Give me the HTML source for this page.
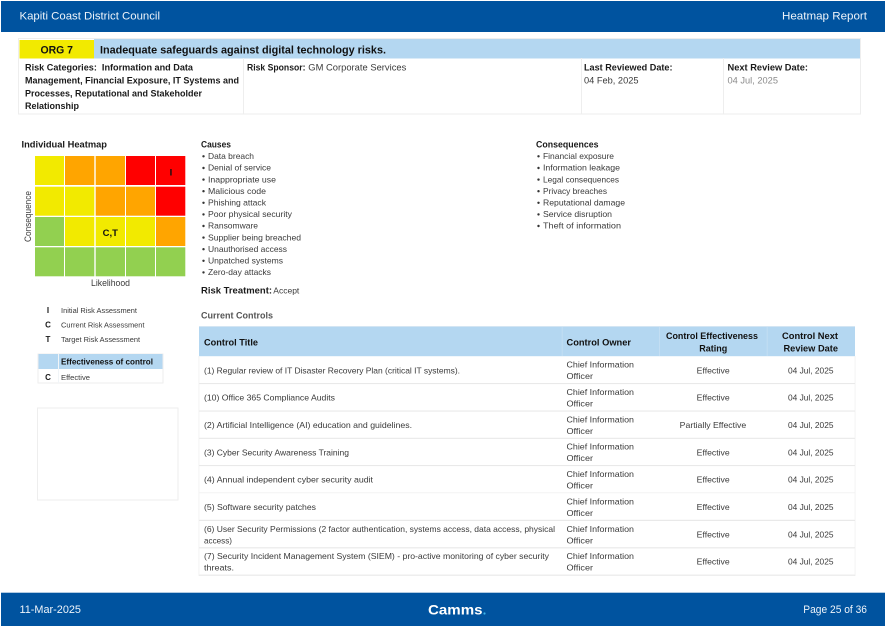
<!DOCTYPE html>
<html lang="en">
<head>
<meta charset="utf-8">
<title>Heatmap Report</title>
<style>
html,body{margin:0;padding:0;background:#fff;width:885px;height:626px;overflow:hidden}
svg{display:block;filter:blur(.35px)}
text{font-family:"Liberation Sans",sans-serif;font-size:8.4px;fill:#3a3a3a}
.b{font-weight:bold;fill:#1a1a1a}
.w{fill:#eef4fa;font-size:11px}
.h{font-size:9px}
.m{text-anchor:middle}
</style>
</head>
<body>
<svg width="885" height="626" viewBox="0 0 885 626" xmlns="http://www.w3.org/2000/svg">
<rect width="885" height="626" fill="#fff"/>

<!-- Header -->
<rect x="1" y="1" width="884" height="31" fill="#00539f"/>
<text class="w" x="19.5" y="19.5" textLength="140.5" lengthAdjust="spacingAndGlyphs">Kapiti Coast District Council</text>
<text class="w" x="782" y="19.5" textLength="85" lengthAdjust="spacingAndGlyphs">Heatmap Report</text>

<!-- Risk header -->
<rect x="18.5" y="38.5" width="842" height="75.5" fill="#fff" stroke="#eeeeee" stroke-width="1"/>
<rect x="94" y="39" width="766" height="19.5" fill="#b4d7f1"/>
<rect x="19.5" y="40" width="74.5" height="18.5" fill="#f2ea00"/>
<text class="b" x="40.5" y="53.5" style="font-size:11.4px;fill:#111" textLength="32.5" lengthAdjust="spacingAndGlyphs">ORG 7</text>
<text class="b" x="100" y="53.5" style="font-size:11.2px;fill:#111" textLength="286" lengthAdjust="spacingAndGlyphs">Inadequate safeguards against digital technology risks.</text>
<rect x="243" y="58" width="1" height="56" fill="#eeeeee"/>
<rect x="581" y="58" width="1" height="56" fill="#eeeeee"/>
<rect x="723" y="58" width="1" height="56" fill="#eeeeee"/>
<text class="b h" x="25" y="70.7" textLength="168" lengthAdjust="spacingAndGlyphs" xml:space="preserve">Risk Categories:  Information and Data</text>
<text class="b h" x="25" y="83.5" textLength="214" lengthAdjust="spacingAndGlyphs">Management, Financial Exposure, IT Systems and</text>
<text class="b h" x="25" y="96.3" textLength="177" lengthAdjust="spacingAndGlyphs">Processes, Reputational and Stakeholder</text>
<text class="b h" x="25" y="109" textLength="54" lengthAdjust="spacingAndGlyphs">Relationship</text>
<text class="b h" x="247" y="70.7" textLength="58.5" lengthAdjust="spacingAndGlyphs">Risk Sponsor:</text>
<text class="h" x="308.3" y="70.7" textLength="98" lengthAdjust="spacingAndGlyphs">GM Corporate Services</text>
<text class="b h" x="584" y="70.7" textLength="88.5" lengthAdjust="spacingAndGlyphs">Last Reviewed Date:</text>
<text class="h" x="584" y="83.5" textLength="54.5" lengthAdjust="spacingAndGlyphs">04 Feb, 2025</text>
<text class="b h" x="727.5" y="70.7" textLength="80.5" lengthAdjust="spacingAndGlyphs">Next Review Date:</text>
<text class="h" x="727.5" y="83.5" textLength="50.5" lengthAdjust="spacingAndGlyphs" style="fill:#8a8a8a">04 Jul, 2025</text>

<!-- Heatmap -->
<text class="b h" x="21.5" y="147.5" textLength="85.5" lengthAdjust="spacingAndGlyphs">Individual Heatmap</text>
<g>
<rect x="35" y="156" width="29" height="29" fill="#f2ea00"/>
<rect x="65" y="156" width="29.3" height="29" fill="#ffa500"/>
<rect x="95.7" y="156" width="29.3" height="29" fill="#ffa500"/>
<rect x="126" y="156" width="29" height="29" fill="#ff0000"/>
<rect x="156" y="156" width="29.3" height="29" fill="#ff0000"/>
<rect x="35" y="186.7" width="29" height="29" fill="#f2ea00"/>
<rect x="65" y="186.7" width="29.3" height="29" fill="#f2ea00"/>
<rect x="95.7" y="186.7" width="29.3" height="29" fill="#ffa500"/>
<rect x="126" y="186.7" width="29" height="29" fill="#ffa500"/>
<rect x="156" y="186.7" width="29.3" height="29" fill="#ff0000"/>
<rect x="35" y="217" width="29" height="29" fill="#92d050"/>
<rect x="65" y="217" width="29.3" height="29" fill="#f2ea00"/>
<rect x="95.7" y="217" width="29.3" height="29" fill="#f2ea00"/>
<rect x="126" y="217" width="29" height="29" fill="#f2ea00"/>
<rect x="156" y="217" width="29.3" height="29" fill="#ffa500"/>
<rect x="35" y="247.3" width="29" height="29" fill="#92d050"/>
<rect x="65" y="247.3" width="29.3" height="29" fill="#92d050"/>
<rect x="95.7" y="247.3" width="29.3" height="29" fill="#92d050"/>
<rect x="126" y="247.3" width="29" height="29" fill="#92d050"/>
<rect x="156" y="247.3" width="29.3" height="29" fill="#92d050"/>
</g>
<text class="b m" x="171" y="175.3" style="font-size:9.5px;fill:#111">I</text>
<text class="b m" x="110.3" y="236" style="font-size:9.5px;fill:#111">C,T</text>
<text class="h m" transform="translate(30.8,216.5) rotate(-90)" x="0" y="0" textLength="51" lengthAdjust="spacingAndGlyphs">Consequence</text>
<text class="h" x="91" y="286" textLength="39" lengthAdjust="spacingAndGlyphs">Likelihood</text>

<!-- Legend -->
<text class="b m" x="48" y="313" style="font-size:8px">I</text>
<text x="61" y="313" style="font-size:7.7px" textLength="76" lengthAdjust="spacingAndGlyphs">Initial Risk Assessment</text>
<text class="b m" x="48" y="327.5" style="font-size:8px">C</text>
<text x="61" y="327.5" style="font-size:7.7px" textLength="83.5" lengthAdjust="spacingAndGlyphs">Current Risk Assessment</text>
<text class="b m" x="48" y="342" style="font-size:8px">T</text>
<text x="61" y="342" style="font-size:7.7px" textLength="79" lengthAdjust="spacingAndGlyphs">Target Risk Assessment</text>

<rect x="38" y="354" width="125" height="29" fill="#fff" stroke="#eeeeee" stroke-width="1"/>
<rect x="38.5" y="354" width="124" height="15" fill="#b4d7f1"/>
<rect x="58" y="354" width="1" height="29" fill="#f1f5f8"/>
<text class="b" x="61" y="364.5" style="font-size:8.3px;fill:#111" textLength="92" lengthAdjust="spacingAndGlyphs">Effectiveness of control</text>
<text class="b m" x="48" y="380" style="font-size:8px">C</text>
<text x="61" y="380" style="font-size:7.7px" textLength="29" lengthAdjust="spacingAndGlyphs">Effective</text>

<rect x="37.5" y="408" width="140.5" height="92" fill="#fff" stroke="#eeeeee" stroke-width="1"/>

<!-- Causes -->
<text class="b h" x="201" y="147.5" textLength="30" lengthAdjust="spacingAndGlyphs">Causes</text>
<g fill="#333">
<circle cx="203.5" cy="156.3" r="1.2"/><circle cx="203.5" cy="168" r="1.2"/><circle cx="203.5" cy="179.6" r="1.2"/><circle cx="203.5" cy="191.2" r="1.2"/><circle cx="203.5" cy="202.8" r="1.2"/><circle cx="203.5" cy="214.4" r="1.2"/><circle cx="203.5" cy="226" r="1.2"/><circle cx="203.5" cy="237.6" r="1.2"/><circle cx="203.5" cy="249.2" r="1.2"/><circle cx="203.5" cy="260.8" r="1.2"/><circle cx="203.5" cy="272.4" r="1.2"/>
<circle cx="538.5" cy="156.3" r="1.2"/><circle cx="538.5" cy="168" r="1.2"/><circle cx="538.5" cy="179.6" r="1.2"/><circle cx="538.5" cy="191.2" r="1.2"/><circle cx="538.5" cy="202.8" r="1.2"/><circle cx="538.5" cy="214.4" r="1.2"/><circle cx="538.5" cy="226" r="1.2"/>
</g>
<text x="208" y="159" textLength="46" lengthAdjust="spacingAndGlyphs">Data breach</text>
<text x="208" y="170.7" textLength="63" lengthAdjust="spacingAndGlyphs">Denial of service</text>
<text x="208" y="182.3" textLength="68" lengthAdjust="spacingAndGlyphs">Inappropriate use</text>
<text x="208" y="193.9" textLength="58" lengthAdjust="spacingAndGlyphs">Malicious code</text>
<text x="208" y="205.5" textLength="58" lengthAdjust="spacingAndGlyphs">Phishing attack</text>
<text x="208" y="217.1" textLength="84" lengthAdjust="spacingAndGlyphs">Poor physical security</text>
<text x="208" y="228.7" textLength="50" lengthAdjust="spacingAndGlyphs">Ransomware</text>
<text x="208" y="240.3" textLength="93" lengthAdjust="spacingAndGlyphs">Supplier being breached</text>
<text x="208" y="251.9" textLength="79" lengthAdjust="spacingAndGlyphs">Unauthorised access</text>
<text x="208" y="263.5" textLength="75" lengthAdjust="spacingAndGlyphs">Unpatched systems</text>
<text x="208" y="275.1" textLength="63" lengthAdjust="spacingAndGlyphs">Zero-day attacks</text>
<text class="b h" x="201" y="293.5" textLength="71" lengthAdjust="spacingAndGlyphs">Risk Treatment:</text>
<text x="273.3" y="293.5" textLength="26" lengthAdjust="spacingAndGlyphs">Accept</text>
<text class="b h" x="201" y="318.3" textLength="72" lengthAdjust="spacingAndGlyphs" style="fill:#555">Current Controls</text>

<!-- Consequences -->
<text class="b h" x="536" y="147.5" textLength="62.5" lengthAdjust="spacingAndGlyphs">Consequences</text>
<text x="543" y="159" textLength="71" lengthAdjust="spacingAndGlyphs">Financial exposure</text>
<text x="543" y="170.7" textLength="77" lengthAdjust="spacingAndGlyphs">Information leakage</text>
<text x="543" y="182.3" textLength="76" lengthAdjust="spacingAndGlyphs">Legal consequences</text>
<text x="543" y="193.9" textLength="64" lengthAdjust="spacingAndGlyphs">Privacy breaches</text>
<text x="543" y="205.5" textLength="82" lengthAdjust="spacingAndGlyphs">Reputational damage</text>
<text x="543" y="217.1" textLength="69" lengthAdjust="spacingAndGlyphs">Service disruption</text>
<text x="543" y="228.7" textLength="78" lengthAdjust="spacingAndGlyphs">Theft of information</text>

<!-- Controls table -->
<rect x="199" y="326.7" width="656" height="29.5" fill="#b4d7f1"/>
<rect x="199" y="326" width="656" height="1" fill="#d3e5f3"/>
<rect x="561.7" y="327" width="1" height="29" fill="#c3def3"/>
<rect x="659" y="327" width="1" height="29" fill="#c3def3"/>
<rect x="766.7" y="327" width="1" height="29" fill="#c3def3"/>
<rect x="198.5" y="356" width=".8" height="220" fill="#f0f0f0"/>
<rect x="854.7" y="356" width=".8" height="220" fill="#f0f0f0"/>
<g fill="#e9e9e9">
<rect x="199" y="383" width="656" height="1.1"/>
<rect x="199" y="410.5" width="656" height="1.1"/>
<rect x="199" y="437.8" width="656" height="1.1"/>
<rect x="199" y="465" width="656" height="1.1"/>
<rect x="199" y="492.4" width="656" height=".8" fill="#f1f1f1"/>
<rect x="199" y="519.8" width="656" height="1.2"/>
<rect x="199" y="547.2" width="656" height="1.2"/>
<rect x="199" y="574.6" width="656" height="1.2"/>
</g>

<text class="b h" x="204" y="345.3" textLength="54" lengthAdjust="spacingAndGlyphs" style="fill:#111">Control Title</text>
<text class="b h" x="566.5" y="345.3" textLength="64.5" lengthAdjust="spacingAndGlyphs" style="fill:#111">Control Owner</text>
<text class="b h" x="666" y="338.8" textLength="92" lengthAdjust="spacingAndGlyphs" style="fill:#111">Control Effectiveness</text>
<text class="b h" x="699.3" y="351.6" textLength="28" lengthAdjust="spacingAndGlyphs" style="fill:#111">Rating</text>
<text class="b h" x="782" y="338.8" textLength="56" lengthAdjust="spacingAndGlyphs" style="fill:#111">Control Next</text>
<text class="b h" x="783.5" y="351.6" textLength="54.5" lengthAdjust="spacingAndGlyphs" style="fill:#111">Review Date</text>

<!-- Titles -->
<text x="204" y="373.3" textLength="256" lengthAdjust="spacingAndGlyphs">(1) Regular review of IT Disaster Recovery Plan (critical IT systems).</text>
<text x="204" y="400.6" textLength="131" lengthAdjust="spacingAndGlyphs">(10) Office 365 Compliance Audits</text>
<text x="204" y="428" textLength="208" lengthAdjust="spacingAndGlyphs">(2) Artificial Intelligence (AI) education and guidelines.</text>
<text x="204" y="455.3" textLength="145" lengthAdjust="spacingAndGlyphs">(3) Cyber Security Awareness Training</text>
<text x="204" y="482.6" textLength="169" lengthAdjust="spacingAndGlyphs">(4) Annual independent cyber security audit</text>
<text x="204" y="510" textLength="112" lengthAdjust="spacingAndGlyphs">(5) Software security patches</text>
<text x="204" y="532" textLength="351" lengthAdjust="spacingAndGlyphs">(6) User Security Permissions (2 factor authentication, systems access, data access, physical</text>
<text x="204" y="543.5" textLength="28" lengthAdjust="spacingAndGlyphs">access)</text>
<text x="204" y="559" textLength="345" lengthAdjust="spacingAndGlyphs">(7) Security Incident Management System (SIEM) - pro-active monitoring of cyber security</text>
<text x="204" y="570.5" textLength="30" lengthAdjust="spacingAndGlyphs">threats.</text>

<!-- Owners -->
<text x="566.5" y="367.3" textLength="67.5" lengthAdjust="spacingAndGlyphs">Chief Information</text><text x="566.5" y="379" textLength="26.5" lengthAdjust="spacingAndGlyphs">Officer</text>
<text x="566.5" y="395" textLength="67.5" lengthAdjust="spacingAndGlyphs">Chief Information</text><text x="566.5" y="406.5" textLength="26.5" lengthAdjust="spacingAndGlyphs">Officer</text>
<text x="566.5" y="422.3" textLength="67.5" lengthAdjust="spacingAndGlyphs">Chief Information</text><text x="566.5" y="434" textLength="26.5" lengthAdjust="spacingAndGlyphs">Officer</text>
<text x="566.5" y="449.5" textLength="67.5" lengthAdjust="spacingAndGlyphs">Chief Information</text><text x="566.5" y="461" textLength="26.5" lengthAdjust="spacingAndGlyphs">Officer</text>
<text x="566.5" y="477" textLength="67.5" lengthAdjust="spacingAndGlyphs">Chief Information</text><text x="566.5" y="488.7" textLength="26.5" lengthAdjust="spacingAndGlyphs">Officer</text>
<text x="566.5" y="504.3" textLength="67.5" lengthAdjust="spacingAndGlyphs">Chief Information</text><text x="566.5" y="516" textLength="26.5" lengthAdjust="spacingAndGlyphs">Officer</text>
<text x="566.5" y="532" textLength="67.5" lengthAdjust="spacingAndGlyphs">Chief Information</text><text x="566.5" y="543.5" textLength="26.5" lengthAdjust="spacingAndGlyphs">Officer</text>
<text x="566.5" y="559" textLength="67.5" lengthAdjust="spacingAndGlyphs">Chief Information</text><text x="566.5" y="570.5" textLength="26.5" lengthAdjust="spacingAndGlyphs">Officer</text>

<!-- Ratings -->
<text x="696.7" y="373.3" textLength="33" lengthAdjust="spacingAndGlyphs">Effective</text>
<text x="696.7" y="400.6" textLength="33" lengthAdjust="spacingAndGlyphs">Effective</text>
<text x="679.7" y="428" textLength="66.5" lengthAdjust="spacingAndGlyphs">Partially Effective</text>
<text x="696.7" y="455.3" textLength="33" lengthAdjust="spacingAndGlyphs">Effective</text>
<text x="696.7" y="482.6" textLength="33" lengthAdjust="spacingAndGlyphs">Effective</text>
<text x="696.7" y="510" textLength="33" lengthAdjust="spacingAndGlyphs">Effective</text>
<text x="696.7" y="537.3" textLength="33" lengthAdjust="spacingAndGlyphs">Effective</text>
<text x="696.7" y="564.6" textLength="33" lengthAdjust="spacingAndGlyphs">Effective</text>

<!-- Dates -->
<text x="788" y="373.3" textLength="45.5" lengthAdjust="spacingAndGlyphs">04 Jul, 2025</text>
<text x="788" y="400.6" textLength="45.5" lengthAdjust="spacingAndGlyphs">04 Jul, 2025</text>
<text x="788" y="428" textLength="45.5" lengthAdjust="spacingAndGlyphs">04 Jul, 2025</text>
<text x="788" y="455.3" textLength="45.5" lengthAdjust="spacingAndGlyphs">04 Jul, 2025</text>
<text x="788" y="482.6" textLength="45.5" lengthAdjust="spacingAndGlyphs">04 Jul, 2025</text>
<text x="788" y="510" textLength="45.5" lengthAdjust="spacingAndGlyphs">04 Jul, 2025</text>
<text x="788" y="537.3" textLength="45.5" lengthAdjust="spacingAndGlyphs">04 Jul, 2025</text>
<text x="788" y="564.6" textLength="45.5" lengthAdjust="spacingAndGlyphs">04 Jul, 2025</text>

<!-- Footer -->
<rect x="1" y="592.7" width="884" height="33.3" fill="#00539f"/>
<text class="w" x="19.5" y="613" textLength="61.5" lengthAdjust="spacingAndGlyphs">11-Mar-2025</text>
<text x="428" y="614.5" textLength="54.5" lengthAdjust="spacingAndGlyphs" style="font-size:14px;font-weight:bold;fill:#fff">Camms</text>
<circle cx="484.5" cy="613.5" r="1.1" fill="#3db4ea"/>
<text class="w" x="803.3" y="613" textLength="63.7" lengthAdjust="spacingAndGlyphs">Page 25 of 36</text>
</svg>
</body>
</html>
